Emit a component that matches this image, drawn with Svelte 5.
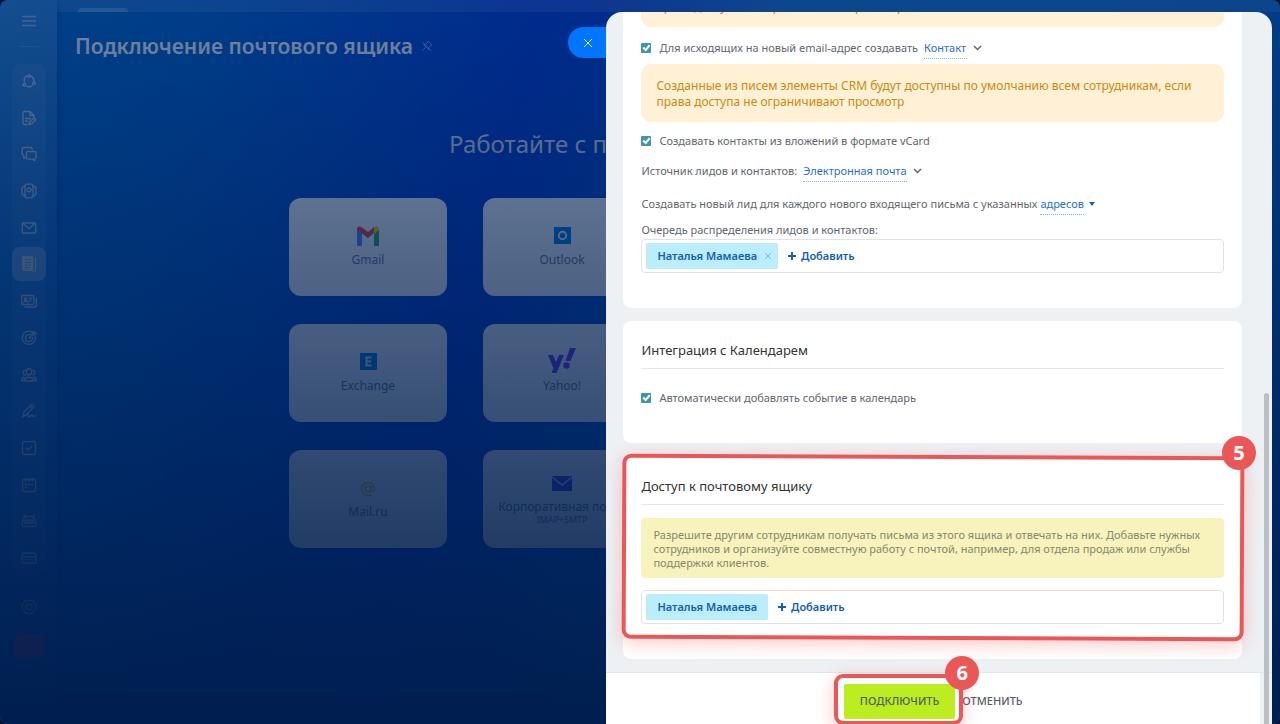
<script>
	const person = 'Наталья Мамаева';
	const crmNote = 'Созданные из писем элементы CRM будут доступны по умолчанию всем сотрудникам, если права доступа не ограничивают просмотр';

	let outgoing = true;
	let vcard = true;
	let calendar = true;
	let entity = 'Контакт';
	let source = 'Электронная почта';

	const menu = [
		{ name: 'Лента', paths: ['M6 3.2a4.8 4.8 0 0 0-2.6 5.6', 'M10.3 3.4a4.8 4.8 0 0 1 2.5 4.4', 'M6 13.3a5 5 0 0 0 5-.6', 'M8 1.8a1.3 1.3 0 1 0 .1 0z', 'M3.4 10.4a1.4 1.4 0 1 0 .1 0z', 'M12.9 8.8a1.4 1.4 0 1 0 .1 0z'] },
		{ name: 'Документы', paths: ['M6 14.5H3.5a1.5 1.5 0 0 1-1.5-1.5V3a1.5 1.5 0 0 1 1.5-1.5H9l4 4V7', 'M9 1.5v4h4', 'M4.5 8.5h5M4.5 11h2', 'M8 14.5l.5-2.5 4.5-4 1.8 1.8-4.5 4.2z'] },
		{ name: 'Чаты', paths: ['M5 11.5l-2.2 1V9.8L1.2 8V3a1.5 1.5 0 0 1 1.5-1.5h7A1.5 1.5 0 0 1 11.2 3v.8', 'M6.8 5.5h7A1.3 1.3 0 0 1 15 6.8v5l-1.2 1v1.8l-2.3-1.4H6.8a1.3 1.3 0 0 1-1.3-1.3V6.8a1.3 1.3 0 0 1 1.3-1.3z'] },
		{ name: 'Группы', paths: ['M5.5 1.2h5a1.5 1.5 0 0 1 1.5 1.5v10.6a1.5 1.5 0 0 1-1.5 1.5h-5A1.5 1.5 0 0 1 4 13.3V2.7a1.5 1.5 0 0 1 1.5-1.5z', 'M4 3.2C2 3.4 1 4 1 5.5v5C1 12 2 12.6 4 12.8', 'M12 3.2c2 .2 3 .8 3 2.3v5c0 1.5-1 2.1-3 2.3', 'M8 4.8a2 2 0 1 0 .1 0z'] },
		{ name: 'Почта', paths: ['M2.2 3h11.6a1 1 0 0 1 1 1v8a1 1 0 0 1-1 1H2.2a1 1 0 0 1-1-1V4a1 1 0 0 1 1-1z', 'M2 3.5l6 5 6-5'] },
		{ name: 'Диск', active: true },
		{ name: 'CRM', paths: ['M2 2.5h9.5A1.5 1.5 0 0 1 13 4v6a1.5 1.5 0 0 1-1.5 1.5H2A1.5 1.5 0 0 1 .5 10V4A1.5 1.5 0 0 1 2 2.5z', 'M15.4 5v7.5a1.5 1.5 0 0 1-1.5 1.5H4', 'M4.5 4.8a1.2 1.2 0 1 0 .1 0zM2.5 9.5c.5-2 3.5-2 4 0M8 5.5h3M8 8h2'] },
		{ name: 'Маркетинг', paths: ['M11 2a6.6 6.6 0 1 0 3.3 4.5', 'M9.5 4.8a3.6 3.6 0 1 0 2 2.6', 'M8 8.3L12 4m-1-1l.6 1.8 1.9.4 1.5-1.9-1.3-.3-.4-1.5z'] },
		{ name: 'Сотрудники', paths: ['M8 1.5c3.8 0 3.3 6.5 0 6.5s-3.8-6.5 0-6.5z', 'M3.5 14h9c0-5-9-5-9 0z', 'M4 3.5c-2.3 0-2.3 4 0 4.5M12 3.5c2.3 0 2.3 4 0 4.5M3 10c-1.6.3-2.3 1.5-2.3 3.5h2.5M13 10c1.6.3 2.3 1.5 2.3 3.5h-2.5'] },
		{ name: 'Подпись', paths: ['M1.5 14l1.8-5.5L10 1.8c1.5-1 3.5 1 2.5 2.5L6 11zM8.7 3l2.7 2.5', 'M1.5 14c3-1 4-3 5.5-3s-.5 3 1 3 2-2 3-2 .5 1.5 1.5 1.5 1.5 0 2.5-1.5'] },
		{ name: 'Задачи', paths: ['M3 1.5h10A1.5 1.5 0 0 1 14.5 3v10a1.5 1.5 0 0 1-1.5 1.5H3A1.5 1.5 0 0 1 1.5 13V3A1.5 1.5 0 0 1 3 1.5z', 'M5 8l2.2 2L11 6'] },
		{ name: 'Календарь', paths: ['M3 2.5h10A1.5 1.5 0 0 1 14.5 4v9a1.5 1.5 0 0 1-1.5 1.5H3A1.5 1.5 0 0 1 1.5 13V4A1.5 1.5 0 0 1 3 2.5z', 'M4.5 1v3M8 1v3M11.5 1v3M4.5 7.5h1M7.5 7.5h1M10.5 7.5h1M4.5 10.5h1'] },
		{ name: 'Роботы', paths: ['M2.5 5.5C5 2.5 11 2.5 13.5 5.5l1.5 5c.2 2-.6 3-2 3H3c-1.4 0-2.2-1-2-3z', 'M4 4L3 1.5M12 4l1-2.5M5 7h6a1 1 0 0 1 1 1v2H4V8a1 1 0 0 1 1-1zM6.5 8v1M9.5 8v1'] },
		{ name: 'Автоматизация', paths: ['M2 7h12a1 1 0 0 1 1 1v4a1 1 0 0 1-1 1H2a1 1 0 0 1-1-1V8a1 1 0 0 1 1-1z', 'M1 9V5.5C1 4 2 3 3.5 3h9C14 3 15 4 15 5.5V9M4 9.5v1M7 9.5h1.5M11 9.5v1'] }
	];

	const services = ['Gmail', 'Outlook', 'Exchange', 'Yahoo!', 'Mail.ru', 'Корпоративная почта'];
</script>

<div class="page">
	<nav class="sidebar" aria-label="Меню">
		<button class="nav-item burger" aria-label="Меню">
			<svg viewBox="0 0 16 16"><path d="M1.5 3.5h13M1.5 8h13M1.5 12.5h13" /></svg>
		</button>
		<hr />
		<div class="nav-group">
			{#each menu as item}
				<button class="nav-item" class:active={item.active} aria-label={item.name}>
					<svg viewBox="0 0 16 16">
						{#if item.active}
							<path class="solid" fill-rule="evenodd" d="M2.5 0h8.5a1.5 1.5 0 0 1 1.5 1.5v12a1.5 1.5 0 0 1-1.5 1.5H2.5A1.5 1.5 0 0 1 1 13.5v-12A1.5 1.5 0 0 1 2.5 0zM4 3v1.500h1.500V3zM7 3v1h3V3zM4 6v1h6V6zM4 8.500v1h2v-1zM7 8.500v1h3v-1zM4 11v1h4v-1z" />
							<path d="M14.5 2.5v11c0 1-.7 1.8-2 1.8" />
						{:else}
							{#each item.paths as d}<path {d} />{/each}
						{/if}
					</svg>
				</button>
			{/each}
		</div>
		<button class="nav-item gear" aria-label="Настройки">
			<svg viewBox="0 0 16 16"><path d="M8 .7l2 1.5 2.5-.2.7 2.4L15.3 6l-.8 2 .8 2-2.1 1.6-.7 2.4-2.5-.2-2 1.5-2-1.5-2.500.2-.7-2.400L.7 10l.8-2-.8-2 2.100-1.600L3.500 2l2.500.2z" /><path d="M8 5a3 3 0 1 0 .1 0z" /></svg>
		</button>
		<span class="profile"></span>
	</nav>

	<main>
		<div class="top"><div class="tab"></div></div>
		<div class="heading">
			<h1>Подключение почтового ящика</h1>
			<svg class="pin" viewBox="0 0 12 12"><path d="M7 1l4 4-1 .3-2.300 2.200v2L2.500 4.500h2L6.800 2zM4.500 7.500L1 11M1.500 2l9 9" /></svg>
		</div>
		<h2>Работайте с почтой</h2>
		<div class="services">
			{#each services as service, i}
				<button class="service" class:stacked={i == 5}>
					{#if i == 0}
						<svg class="logo" viewBox="0 0 22 20">
							<path fill="#4285f4" d="M0 3l5 4v13H1.500A1.500 1.500 0 0 1 0 18.500z" />
							<path fill="#21a453" d="M22 3l-5 4v13h3.500a1.500 1.500 0 0 0 1.500-1.500z" />
							<path fill="#e13c37" d="M0 3C0 .3 3 0 4.500 1L11 6l6-5v6l-6 5-11-8z" />
							<path fill="#fbbc04" d="M17 1c2-1.500 5-.5 5 2v1l-5 4z" />
						</svg>
					{:else if i == 1}
						<svg class="logo" viewBox="0 0 22 20"><path fill="#0078d7" d="M3 1h17v17H3z" /><circle cx="11.500" cy="9.500" r="3.700" fill="none" stroke="#dde4ee" stroke-width="2" /></svg>
					{:else if i == 2}
						<svg class="logo" viewBox="0 0 22 20"><path fill="#0078d7" d="M3 1h17v17H3z" /><path fill="none" stroke="#dde4ee" stroke-width="2" d="M14.500 5.500H9.500v8h5M9.500 9.500h4.500" /></svg>
					{:else if i == 3}
						<svg class="logo yahoo" viewBox="0 0 28 26"><path fill="#6a32e0" d="M0 7h5l3 7 3-7h5L8.500 25h-5l2-4.500zM22 0h6l-5.500 13h-5z" /><circle cx="18.500" cy="17.500" r="3.200" fill="#6a32e0" /></svg>
					{:else if i == 4}
						<svg class="logo" viewBox="0 0 22 20"><g fill="none" stroke="#f2a858" stroke-width="1.500"><circle cx="11" cy="11" r="3" /><path d="M14 8v4c0 2.500 3.500 2 3.500-1A6.500 6.500 0 1 0 14.500 16.500" /></g></svg>
					{:else}
						<svg class="logo" viewBox="0 0 22 20"><path fill="#3838d6" d="M1 1h20v15H1z" /><path fill="none" stroke="#cdd3e6" stroke-width="1.600" d="M1 2l10 8 10-8" /></svg>
					{/if}
					<span>{service}</span>
					{#if i == 5}<small>IMAP+SMTP</small>{/if}
				</button>
			{/each}
		</div>
	</main>
	<div class="shade"></div>

	<div class="drawer">
		<button class="close" aria-label="Закрыть">
			<svg viewBox="0 0 10 10"><path d="M1 1l8 8M9 1L1 9" /></svg>
		</button>
		<div class="scroll">
			<section>
				<div class="note">{crmNote}</div>
				<div class="row">
					<input id="outgoing" type="checkbox" bind:checked={outgoing} />
					<label for="outgoing">Для исходящих на новый email-адрес создавать</label>
					<select bind:value={entity} aria-label="Создавать">
						<option>Контакт</option>
					</select>
					<svg class="chevron" viewBox="0 0 9 6"><path d="M1 1l3.500 3.500L8 1" /></svg>
				</div>
				<div class="note second">{crmNote}</div>
				<div class="row">
					<input id="vcard" type="checkbox" bind:checked={vcard} />
					<label for="vcard">Создавать контакты из вложений в формате vCard</label>
				</div>
				<div class="row">
					<label for="source">Источник лидов и контактов:</label>
					<select id="source" bind:value={source}>
						<option>Электронная почта</option>
					</select>
					<svg class="chevron" viewBox="0 0 9 6"><path d="M1 1l3.500 3.500L8 1" /></svg>
				</div>
				<div class="row lead">
					<span>Создавать новый лид для каждого нового входящего письма с указанных</span>
					<button class="dotted">адресов</button>
					<svg class="caret" viewBox="0 0 6 4"><path d="M0 0h6L3 4z" /></svg>
				</div>
				<p class="caption">Очередь распределения лидов и контактов:</p>
				<div class="field">
					<span class="tag">{person}<button class="remove" aria-label="Удалить"><svg viewBox="0 0 6 6"><path d="M0 0l6 6M6 0L0 6" /></svg></button></span>
					<button class="add"><svg viewBox="0 0 8 8"><path d="M4 0v8M0 4h8" /></svg>Добавить</button>
				</div>
			</section>

			<section class="calendar">
				<h3>Интеграция с Календарем</h3>
				<div class="row">
					<input id="calendar" type="checkbox" bind:checked={calendar} />
					<label for="calendar">Автоматически добавлять событие в календарь</label>
				</div>
			</section>

			<section class="access">
				<h3>Доступ к почтовому ящику</h3>
				<p class="hint">Разрешите другим сотрудникам получать письма из этого ящика и отвечать на них. Добавьте нужных сотрудников и организуйте совместную работу с почтой, например, для отдела продаж или службы поддержки клиентов.</p>
				<div class="field">
					<span class="tag">{person}</span>
					<button class="add"><svg viewBox="0 0 8 8"><path d="M4 0v8M0 4h8" /></svg>Добавить</button>
				</div>
				<div class="frame tilted"></div>
				<span class="step">5</span>
			</section>
		</div>
		<footer>
			<div class="submit">
				<button class="connect">ПОДКЛЮЧИТЬ</button>
				<div class="frame"></div>
				<span class="step">6</span>
			</div>
			<button class="cancel">ОТМЕНИТЬ</button>
		</footer>
		<div class="scrollbar"></div>
	</div>
</div>

<style>
	:global(body) {
		background: #001233;
	}

	.page {
		--text: #5f6670;
		--link: #1f6fd0;
		--blue: #1060b4;
		--red: #eb5757;
		position: relative;
		display: flex;
		height: 100vh;
		overflow: hidden;
		border-radius: 8px;
		background: linear-gradient(105deg, #0060bc 0%, #0056bc 15%, #0036c4 37%, #003cc0 42%, #005cb8 54%, #0054b8 100%);
		font-family: "Noto Sans", "Open Sans", sans-serif;
		font-size: 11px;
		line-height: 16px;
		color: var(--text);
	}

	.page * {
		box-sizing: border-box;
	}

	button, select {
		padding: 0;
		border: 0;
		background: none;
		font: inherit;
		color: inherit;
		cursor: pointer;
	}

	svg {
		display: block;
		fill: none;
		stroke: currentColor;
		flex: none;
	}

	h1, h2, h3, p {
		margin: 0;
	}

	.sidebar {
		width: 57px;
		flex: none;
		display: flex;
		flex-direction: column;
		align-items: center;
		padding: 4px 0 66px;
		background: linear-gradient(rgba(255, 255, 255, 0.14), rgba(255, 255, 255, 0.04) 40%);
		box-shadow: 0 0 8px rgba(0, 20, 80, 0.4);
		color: #a3b4d0;
	}

	.sidebar hr {
		width: 20px;
		margin: 8px 0 17px;
		border: 0;
		border-top: 1px solid rgba(255, 255, 255, 0.12);
	}

	.nav-group {
		flex: 1;
		display: flex;
		flex-direction: column;
		justify-content: space-between;
		border-radius: 8px;
		background: rgba(255, 255, 255, 0.06);
	}

	.nav-item {
		width: 34px;
		height: 34px;
		display: flex;
		align-items: center;
		justify-content: center;
		border-radius: 8px;
	}

	.nav-item svg {
		width: 16px;
		height: 16px;
		stroke-width: 1.3;
		stroke-linecap: round;
		stroke-linejoin: round;
	}

	.nav-item.active {
		background: rgba(255, 255, 255, 0.22);
	}

	.nav-item .solid {
		fill: currentColor;
		stroke: none;
	}

	.burger {
		opacity: 0.7;
	}

	.gear {
		margin: 15px 0 10px;
	}

	.profile {
		width: 30px;
		height: 24px;
		border-radius: 5px;
		background: #c8405c;
	}

	main {
		flex: 1;
	}

	.top {
		height: 12px;
		padding: 8px 21px 0;
		background: rgba(255, 255, 255, 0.09);
	}

	.tab {
		width: 50px;
		height: 4px;
		border-radius: 6px 6px 0 0;
		background: rgba(255, 255, 255, 0.2);
	}

	.heading {
		display: flex;
		align-items: center;
		gap: 8px;
		padding: 18px 18px 0;
		color: #d5dae2;
	}

	h1 {
		font-size: 21px;
		line-height: 32px;
		font-weight: 600;
	}

	.pin {
		width: 12px;
		height: 12px;
		opacity: 0.5;
	}

	h2 {
		margin: 64px 0 36px 392px;
		font-size: 24px;
		line-height: 36px;
		font-weight: 400;
		white-space: nowrap;
		color: #c6cedb;
	}

	.services {
		display: grid;
		grid-template-columns: repeat(2, 158px);
		gap: 28px 36px;
		padding-left: 232px;
	}

	.service {
		height: 98px;
		display: flex;
		flex-direction: column;
		align-items: center;
		padding-top: 28px;
		border-radius: 12px;
		background: #e8ecf2;
		color: #5a6e8c;
		font-size: 12px;
		white-space: nowrap;
	}

	.logo {
		width: 22px;
		height: 20px;
		margin-bottom: 6px;
		stroke: none;
	}

	.yahoo {
		width: 28px;
		height: 26px;
		margin: -4px 0 4px;
	}

	.stacked {
		padding-top: 25px;
	}

	.stacked .logo {
		margin-bottom: 4px;
	}

	.service small {
		font-size: 9px;
		line-height: 9px;
	}

	.shade {
		position: absolute;
		inset: 0;
		background: linear-gradient(rgba(0, 30, 78, 0.45), rgba(0, 30, 78, 0.99));
	}

	.drawer {
		position: absolute;
		top: 12px;
		right: 8px;
		bottom: 0;
		width: 52%;
		display: flex;
		flex-direction: column;
	}

	.close {
		position: absolute;
		top: 15px;
		right: 100%;
		width: 38px;
		height: 31px;
		display: flex;
		align-items: center;
		padding-left: 15px;
		border-radius: 16px 0 0 16px;
		background: #0075ff;
		color: #fff;
	}

	.close svg {
		width: 10px;
		height: 10px;
	}

	.scroll {
		flex: 1;
		min-height: 0;
		display: flex;
		flex-direction: column;
		justify-content: flex-end;
		gap: 13px;
		padding: 0 30px 13px 17px;
		overflow: hidden;
		border-radius: 16px 16px 0 0;
		background: #edf1f4;
	}

	section {
		position: relative;
		flex: none;
		padding: 20px 18px 35px;
		border-radius: 8px;
		background: #fff;
	}

	.calendar {
		padding: 19px 18px 34px;
	}

	h3 {
		padding-bottom: 8px;
		border-bottom: 1px solid #e6e9eb;
		font-size: 13px;
		line-height: 20px;
		font-weight: 400;
		color: #333;
	}

	.calendar h3 {
		margin-bottom: 18px;
	}

	.note {
		margin-bottom: 10px;
		padding: 14px 15px 12px;
		border-radius: 10px;
		background: #fff0d6;
		font-size: 12px;
		line-height: 16px;
		color: #c98a0e;
	}

	.second {
		margin: 5px 0 8px;
	}

	.row {
		display: flex;
		align-items: center;
		height: 22px;
		white-space: nowrap;
	}

	.row + .row {
		margin-top: 8px;
	}

	.row + .lead {
		margin-top: 11px;
	}

	input[type="checkbox"] {
		appearance: none;
		width: 10px;
		height: 10px;
		margin: 0 8px 0 0;
		border-radius: 1px;
		background: #3b97ac;
	}

	input:checked::after {
		content: "";
		display: block;
		height: 10px;
		background: #fff;
		clip-path: polygon(12% 52%, 26% 38%, 42% 54%, 75% 16%, 90% 30%, 43% 84%);
	}

	select, .dotted {
		appearance: none;
		height: 22px;
		margin-left: 6px;
		padding: 3px 0 2px;
		border-bottom: 1px dotted #7db4ec;
		line-height: 16px;
		color: var(--link);
	}

	.dotted {
		margin-left: 3px;
	}

	.chevron {
		width: 9px;
		height: 6px;
		margin-left: 6px;
		stroke-width: 1.5;
	}

	.caret {
		width: 6px;
		height: 4px;
		margin-left: 5px;
		fill: var(--blue);
		stroke: none;
	}

	.caption {
		margin: 7px 0 1px;
	}

	.field {
		display: flex;
		align-items: center;
		height: 34px;
		padding: 0 4px;
		border: 1px solid #dfe3e6;
		border-radius: 4px;
		font-weight: 600;
		color: var(--blue);
	}

	.tag {
		display: flex;
		align-items: center;
		height: 26px;
		padding: 0 11px;
		border-radius: 2px;
		background: #bcedfc;
	}

	.remove {
		margin: 0 -4px 0 8px;
		color: #8fb6cc;
	}

	.remove svg {
		width: 6px;
		height: 6px;
	}

	.add {
		display: flex;
		align-items: center;
		gap: 5px;
		margin-left: 10px;
	}

	.add svg {
		width: 8px;
		height: 8px;
		stroke-width: 2;
	}

	.hint {
		margin: 13px 0 12px;
		padding: 10px 12px 8px;
		border-radius: 4px;
		background: #f8f3bc;
		line-height: 14px;
		color: #85886f;
	}

	.frame {
		position: absolute;
		inset: -10px -8px -6px -10px;
		border: 4px solid var(--red);
		border-radius: 9px;
		box-shadow: 0 4px 18px rgba(235, 87, 87, 0.32);
		pointer-events: none;
	}

	.tilted {
		inset: -1px -2px 19px -1px;
		transform: rotate(0.25deg);
	}

	.step {
		position: absolute;
		top: -20px;
		right: -14px;
		width: 34px;
		height: 34px;
		border-radius: 50%;
		background: var(--red);
		font-size: 20px;
		line-height: 34px;
		font-weight: 700;
		text-align: center;
		color: #fff;
	}

	footer {
		display: flex;
		align-items: center;
		justify-content: center;
		gap: 7px;
		height: 52px;
		padding: 5px 12px 0 0;
		border-top: 1px solid #e3e7ea;
		background: linear-gradient(to left, #edf1f4 12px, #fff 12px);
		color: #525c69;
	}

	.submit {
		position: relative;
	}

	.submit .step {
		top: -28px;
		right: -24px;
	}

	.connect {
		height: 35px;
		padding: 0 16px;
		border-radius: 2px;
		background: #bbed21;
		font-weight: 500;
	}

	.cancel {
		font-weight: 500;
	}

	.scrollbar {
		position: absolute;
		right: 3px;
		bottom: 0;
		width: 5px;
		height: 331px;
		border-radius: 3px 3px 0 0;
		background: #b9bfc2;
	}
</style>
